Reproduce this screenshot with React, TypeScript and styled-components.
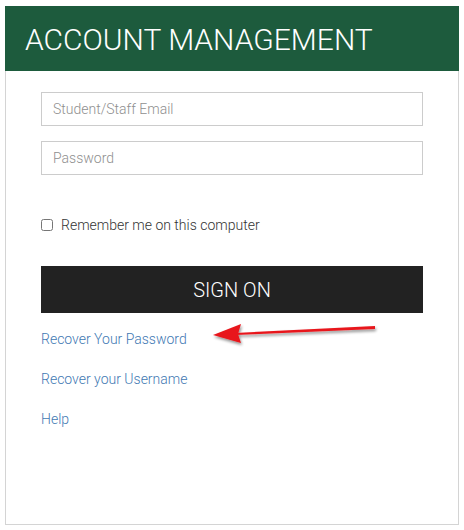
import React, { useState } from "react";
import styled, { createGlobalStyle } from "styled-components";

const Global = createGlobalStyle`
    html, body {
        margin: 0;
        padding: 0;
        background: #ffffff;
        font-family: Roboto, "Liberation Sans", sans-serif;
    }
`;

const Pagina = styled.div`
    padding: 6px 5px 5px 5px;
    position: relative;
`;

const Cartao = styled.div`
    width: 454px;
    height: 519px;
    box-sizing: border-box;
    border: 1px solid #d4d4d4;
    border-top: none;
    display: flex;
    flex-direction: column;
`;

const Cabecalho = styled.div`
    margin: 0 -1px;
    height: 65px;
    background: #1d5b3d;
    display: flex;
    align-items: center;
    padding-left: 20px;
`;

const Titulo = styled.h1`
    margin: 0;
    color: #ffffff;
    font-size: 30px;
    font-weight: 300;
    padding-top: 2px;
`;

const Formulario = styled.form`
    display: flex;
    flex-direction: column;
    padding: 21px 35px 0 35px;
`;

const Campo = styled.input`
    height: 34px;
    box-sizing: border-box;
    border: 1px solid #cccccc;
    padding: 0 11px;
    font-family: Roboto, "Liberation Sans", sans-serif;
    font-size: 14px;
    font-weight: 300;
    color: #333;
    margin-bottom: 15px;
    outline: none;

    &::placeholder {
        color: #8f8f8f;
    }
`;

const Lembrar = styled.label`
    display: flex;
    align-items: center;
    gap: 8px;
    margin-top: 27px;
    font-size: 14px;
    font-weight: 300;
    color: #333333;
`;

const Caixa = styled.input`
    margin: 0;
    width: 12px;
    height: 12px;
`;

const BotaoEntrar = styled.button`
    margin-top: 33px;
    height: 47px;
    border: none;
    background: #222222;
    color: #ffffff;
    font-family: Roboto, "Liberation Sans", sans-serif;
    font-size: 20px;
    font-weight: 300;
    cursor: pointer;
`;

const Ligacoes = styled.div`
    display: flex;
    flex-direction: column;
    gap: 24px;
    margin-top: 18px;
`;

const Ligacao = styled.a`
    color: #3f79b3;
    font-size: 14px;
    font-weight: 300;
    line-height: 16px;
    text-decoration: none;
`;

const Seta = styled.svg`
    position: absolute;
    left: 205px;
    top: 318px;
`;

export default function App() {
    const [email, setEmail] = useState("");
    const [senha, setSenha] = useState("");

    return (
        <>
            <Global />
            <Pagina>
                <Cartao>
                    <Cabecalho>
                        <Titulo>ACCOUNT MANAGEMENT</Titulo>
                    </Cabecalho>
                    <Formulario onSubmit={(e) => e.preventDefault()}>
                        <Campo
                            type="email"
                            placeholder="Student/Staff Email"
                            value={email}
                            onChange={(e) => setEmail(e.target.value)}
                        />
                        <Campo
                            type="password"
                            placeholder="Password"
                            value={senha}
                            onChange={(e) => setSenha(e.target.value)}
                        />
                        <Lembrar>
                            <Caixa type="checkbox" />
                            Remember me on this computer
                        </Lembrar>
                        <BotaoEntrar type="submit">SIGN ON</BotaoEntrar>
                        <Ligacoes>
                            <Ligacao href="#">Recover Your Password</Ligacao>
                            <Ligacao href="#">Recover your Username</Ligacao>
                            <Ligacao href="#">Help</Ligacao>
                        </Ligacoes>
                    </Formulario>
                </Cartao>
                <Seta width="180" height="30" viewBox="0 0 180 30">
                    <defs>
                        <filter id="sombra" x="-10%" y="-50%" width="120%" height="200%">
                            <feGaussianBlur in="SourceAlpha" stdDeviation="1.5" />
                            <feOffset dx="1" dy="2" />
                            <feComponentTransfer>
                                <feFuncA type="linear" slope="0.45" />
                            </feComponentTransfer>
                            <feMerge>
                                <feMergeNode />
                                <feMergeNode in="SourceGraphic" />
                            </feMerge>
                        </filter>
                    </defs>
                    <g filter="url(#sombra)">
                        <path d="M170 8 L30 15 L30 17 L170 11 Z" fill="#e8161b" />
                        <path d="M8 17 L36 6 L33 16 L36 25 Z" fill="#e8161b" />
                    </g>
                </Seta>
            </Pagina>
        </>
    );
}
